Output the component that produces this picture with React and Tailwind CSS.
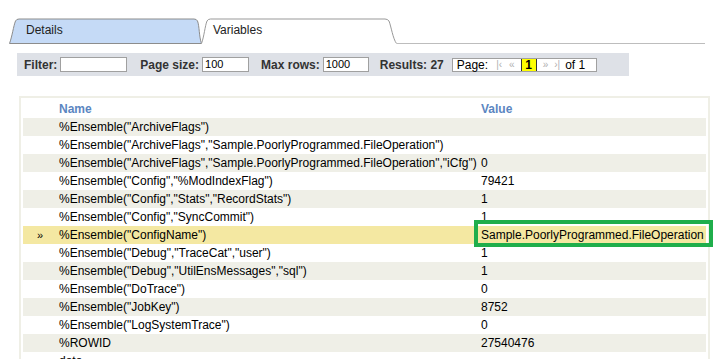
import React from 'react'

const ROWS = [
  ['%Ensemble("ArchiveFlags")', ''],
  ['%Ensemble("ArchiveFlags","Sample.PoorlyProgrammed.FileOperation")', ''],
  ['%Ensemble("ArchiveFlags","Sample.PoorlyProgrammed.FileOperation","iCfg")', '0'],
  ['%Ensemble("Config","%ModIndexFlag")', '79421'],
  ['%Ensemble("Config","Stats","RecordStats")', '1'],
  ['%Ensemble("Config","SyncCommit")', '1'],
  ['%Ensemble("ConfigName")', 'Sample.PoorlyProgrammed.FileOperation'],
  ['%Ensemble("Debug","TraceCat","user")', '1'],
  ['%Ensemble("Debug","UtilEnsMessages","sql")', '1'],
  ['%Ensemble("DoTrace")', '0'],
  ['%Ensemble("JobKey")', '8752'],
  ['%Ensemble("LogSystemTrace")', '0'],
  ['%ROWID', '27540476'],
  ['data', ''],
]

const SELECTED = 6

const Tabs = () => (
  <div className="flex items-end pl-[9px] pr-[13px] pt-[17px]">
    {/* Details */}
    <div className="relative w-[193px] h-[27px]">
      <svg className="absolute inset-0" width="193" height="27" viewBox="0 0 193 27">
        <path d="M0.5 26.5 C3 20 4.5 9 6.5 4 Q7.5 2 10 2 L185 2 Q187.5 2 188.5 4 C190.5 9 190 20 192.5 26.5 Z"
          fill="#c5daf6" stroke="#8c8c8c" strokeWidth="1" />
      </svg>
      <span className="relative block pl-[17px] leading-[27px] text-[12px] text-[#222]">Details</span>
    </div>
    {/* Variables (active) */}
    <div className="relative -ml-[1px] w-[196px] h-[27px]">
      <svg className="absolute inset-0" width="196" height="27" viewBox="0 0 196 27">
        <path d="M0.5 26.5 C3 20 4 9 6 4 Q7 2 9.5 2 L184 2 Q186.5 2 188 4 C190 9 192 22 195.5 26.5"
          fill="#ffffff" stroke="#999999" strokeWidth="1" />
      </svg>
      <span className="relative block pl-[12px] leading-[27px] text-[12px] text-[#222]">Variables</span>
    </div>
    <div className="flex-1 h-[27px] border-b border-[#bdbdbd]" />
  </div>
)

const Toolbar = () => (
  <div className="ml-[17px] mt-[9px] w-[612px] h-[23px] bg-[#dee1e7] flex items-center pl-[7px] text-[12px] text-[#333]">
    <span className="font-bold">Filter:</span>
    <div className="ml-[3px] w-[67px] h-[15px] bg-white border border-[#a0a0a0]" />
    <span className="ml-[13px] font-bold">Page size:</span>
    <div className="ml-[3px] w-[47px] h-[15px] bg-white border border-[#a0a0a0] pl-[2px] text-[11px] leading-[13px] text-black">100</div>
    <span className="ml-[12px] font-bold">Max rows:</span>
    <div className="ml-[3px] w-[46px] h-[15px] bg-white border border-[#a0a0a0] pl-[2px] text-[11px] leading-[13px] text-black">1000</div>
    <span className="ml-[11px] font-bold">Results: 27</span>
    <div className="ml-[8px] w-[145px] h-[14px] bg-white border border-[#a0a0a0] flex items-center pl-[4px] text-black">
      <span>Page:</span>
      <span className="ml-[8px] text-[10px] text-[#b0b0b0]">|‹</span>
      <span className="ml-[7px] text-[10px] text-[#b0b0b0]">«</span>
      <span className="ml-[6px] h-[12px] w-[16px] bg-[#ffff00] border-x border-[#333] font-bold text-center leading-[12px]">1</span>
      <span className="ml-[6px] text-[10px] text-[#b0b0b0]">»</span>
      <span className="ml-[6px] text-[10px] text-[#b0b0b0]">›|</span>
      <span className="ml-[5px]">of 1</span>
    </div>
  </div>
)

const VarTable = () => (
  <div className="ml-[19px] mt-[20px] w-[691px] border-2 border-[#efefe6] px-[2px] pt-[1px] text-[12px] text-black">
    <div className="flex h-[19px] items-center font-bold text-[#5b86c1]">
      <div className="w-[36px]" />
      <div className="w-[422px]">Name</div>
      <div className="flex-1">Value</div>
    </div>
    {ROWS.map(([name, value], i) => {
      const selected = i === SELECTED
      const bg = selected ? 'bg-[#f4e8a2]' : i % 2 === 0 ? 'bg-[#efefe7]' : 'bg-white'
      return (
        <div key={name} className={`flex h-[18px] items-center whitespace-nowrap ${bg}`}>
          <div className="w-[36px] pl-[14px] text-[11px]">{selected ? '»' : ''}</div>
          <div className="w-[422px]">{name}</div>
          <div className="relative flex-1">
            {value}
            {selected && (
              <div className="absolute -left-[7px] -top-[6px] w-[239px] h-[27px] border-[4px] border-[#1fae4b]" />
            )}
          </div>
        </div>
      )
    })}
  </div>
)

export default function App() {
  return (
    <div className="w-[718px] h-[359px] overflow-hidden bg-white font-['Liberation_Sans',Arial,sans-serif]">
      <Tabs />
      <Toolbar />
      <VarTable />
    </div>
  )
}
